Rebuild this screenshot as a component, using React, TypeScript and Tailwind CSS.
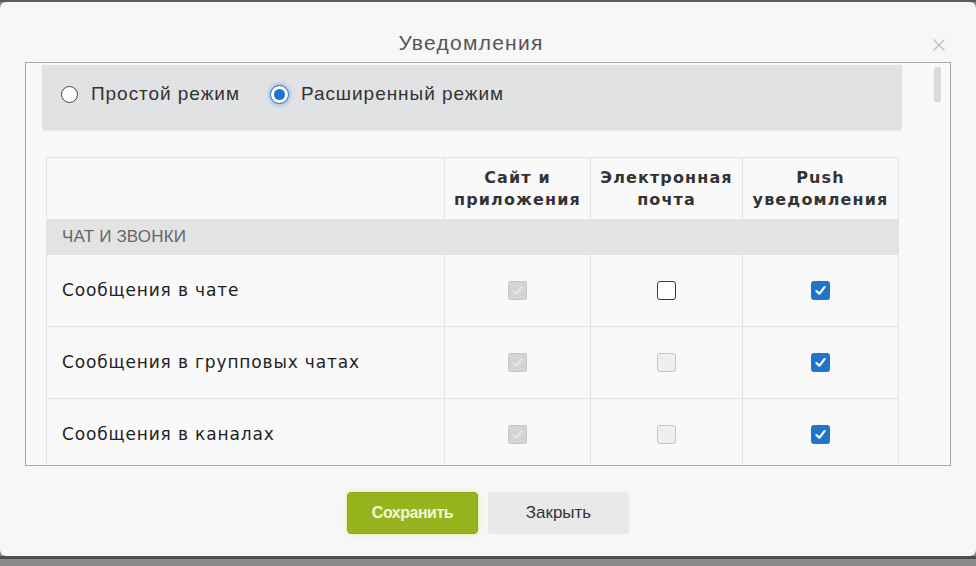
import React from "react";

const ROWS = [
  { label: "Сообщения в чате", email: "on" },
  { label: "Сообщения в групповых чатах", email: "off" },
  { label: "Сообщения в каналах", email: "off" },
];

function Check({ kind }: { kind: "disabledOn" | "empty" | "disabledOff" | "on" }) {
  if (kind === "on") {
    return (
      <span className="flex h-[19px] w-[19px] items-center justify-center rounded-[3px] bg-[#1f74cc]">
        <svg width="13" height="13" viewBox="0 0 14 14">
          <path d="M2.5 7.5 L5.8 10.5 L11.5 3.2" fill="none" stroke="white" strokeWidth="2.2" strokeLinecap="round" strokeLinejoin="round" />
        </svg>
      </span>
    );
  }
  if (kind === "disabledOn") {
    return (
      <span className="flex h-[19px] w-[19px] items-center justify-center rounded-[2px] border border-[#c8c8c8] bg-[#d4d4d4]">
        <svg width="13" height="13" viewBox="0 0 14 14">
          <path d="M2.5 7.5 L5.8 10.5 L11.5 3.2" fill="none" stroke="#e6e6e6" strokeWidth="2" strokeLinecap="round" strokeLinejoin="round" />
        </svg>
      </span>
    );
  }
  if (kind === "empty") {
    return <span className="block h-[19px] w-[19px] rounded-[3px] border-[1.5px] border-[#3a3a3a] bg-white" />;
  }
  return <span className="block h-[19px] w-[19px] rounded-[3px] border border-[#c4c4c4] bg-[#efefef]" />;
}

export default function App() {
  return (
    <div className="flex h-[566px] w-[976px] flex-col overflow-hidden bg-[#8a8a8a]" style={{ fontFamily: "'Liberation Sans', Arial, sans-serif" }}>
      <div className="h-[2px] shrink-0 bg-[#5c5c5c]" />
      <div className="relative flex h-[554px] shrink-0 flex-col rounded-[6px] bg-[#f7f7f7]">
        {/* header */}
        <div className="relative flex h-[60px] items-start justify-center pr-[34px] pt-[28px]">
          <span className="text-[21px] leading-[26px] tracking-[0.06em] text-[#555]">Уведомления</span>
          <button type="button" className="absolute right-[30px] top-[36px]">
            <svg width="14" height="14" viewBox="0 0 14 14">
              <path d="M1.5 1.5 L12.5 12.5 M12.5 1.5 L1.5 12.5" stroke="#bdbdbd" strokeWidth="1.3" />
            </svg>
          </button>
        </div>

        {/* scroll box */}
        <div className="relative mx-[25px] h-[404px] overflow-hidden border border-[#a9a9a9] bg-[#f9f9f9]">
          <div className="absolute right-[9px] top-[4px] h-[35px] w-[7px] rounded-[2px] bg-[#dadada]" />

          <div className="ml-[16px] mt-[2px] flex h-[65px] w-[860px] items-start gap-[30px] rounded-b-[4px] bg-[#e1e2e4] pl-[19px] pt-[16px] shadow-[0_1px_2px_rgba(0,0,0,0.08)]">
            <label className="flex items-center gap-[13px]">
              <span className="block h-[17px] w-[17px] rounded-full border-[1.5px] border-[#444] bg-white" />
              <span className="text-[19px] leading-[26px] tracking-[0.05em] text-[#333]">Простой режим</span>
            </label>
            <label className="flex items-center gap-[12px]">
              <span className="flex h-[19px] w-[19px] items-center justify-center rounded-full border-[1.5px] border-[#1f74cc] bg-white shadow-[0_0_3px_2px_rgba(80,150,230,0.35)]">
                <span className="block h-[11px] w-[11px] rounded-full bg-[#1f74cc]" />
              </span>
              <span className="text-[19px] leading-[26px] tracking-[0.05em] text-[#333]">Расширенный режим</span>
            </label>
          </div>

          <div className="ml-[20px] mt-[27px] w-[853px] border-l border-t border-r border-[#e4e4e4]" style={{ fontFamily: "'DejaVu Sans', Verdana, sans-serif" }}>
            <div className="grid h-[61px] grid-cols-[397px_146px_152px_156px]">
              <div />
              <div className="flex items-center justify-center border-l border-[#e4e4e4] text-center text-[16px] font-semibold leading-[22px] tracking-[0.07em] text-[#333]">
                Сайт и
                <br />
                приложения
              </div>
              <div className="flex items-center justify-center border-l border-[#e4e4e4] text-center text-[16px] font-semibold leading-[22px] tracking-[0.07em] text-[#333]">
                Электронная
                <br />
                почта
              </div>
              <div className="flex items-center justify-center border-l border-[#e4e4e4] text-center text-[16px] font-semibold leading-[22px] tracking-[0.07em] text-[#333]">
                Push
                <br />
                уведомления
              </div>
            </div>
            <div className="flex h-[36px] items-center bg-[#e3e3e3] pl-[15px] text-[17px] tracking-[0.01em] text-[#666]" style={{ fontFamily: "'Liberation Sans', Arial, sans-serif" }}>
              ЧАТ И ЗВОНКИ
            </div>
            {ROWS.map((row) => (
              <div key={row.label} className="grid h-[72px] grid-cols-[397px_146px_152px_156px] border-b border-[#e4e4e4]">
                <div className="flex items-center pl-[15px] text-[17px] tracking-[0.05em] text-[#222]">{row.label}</div>
                <div className="flex items-center justify-center border-l border-[#e4e4e4]">
                  <Check kind="disabledOn" />
                </div>
                <div className="flex items-center justify-center border-l border-[#e4e4e4]">
                  <Check kind={row.email === "on" ? "empty" : "disabledOff"} />
                </div>
                <div className="flex items-center justify-center border-l border-[#e4e4e4]">
                  <Check kind="on" />
                </div>
              </div>
            ))}
          </div>
        </div>

        {/* footer */}
        <div className="flex justify-center gap-[10px] pt-[26px]">
          <button type="button" className="h-[42px] w-[131px] rounded-[4px] border border-[#8aa51a] bg-[#97b41f] text-[16px] font-bold tracking-[-0.03em] text-[#f3f7d8] shadow-[0_0_4px_1px_rgba(220,240,80,0.45)]">
            Сохранить
          </button>
          <button type="button" className="h-[42px] w-[141px] rounded-[3px] bg-[#e9e9e9] text-[17px] text-[#333]">
            Закрыть
          </button>
        </div>
      </div>
      <div className="h-[3px] shrink-0 bg-[#4f4f4f]" />
    </div>
  );
}
